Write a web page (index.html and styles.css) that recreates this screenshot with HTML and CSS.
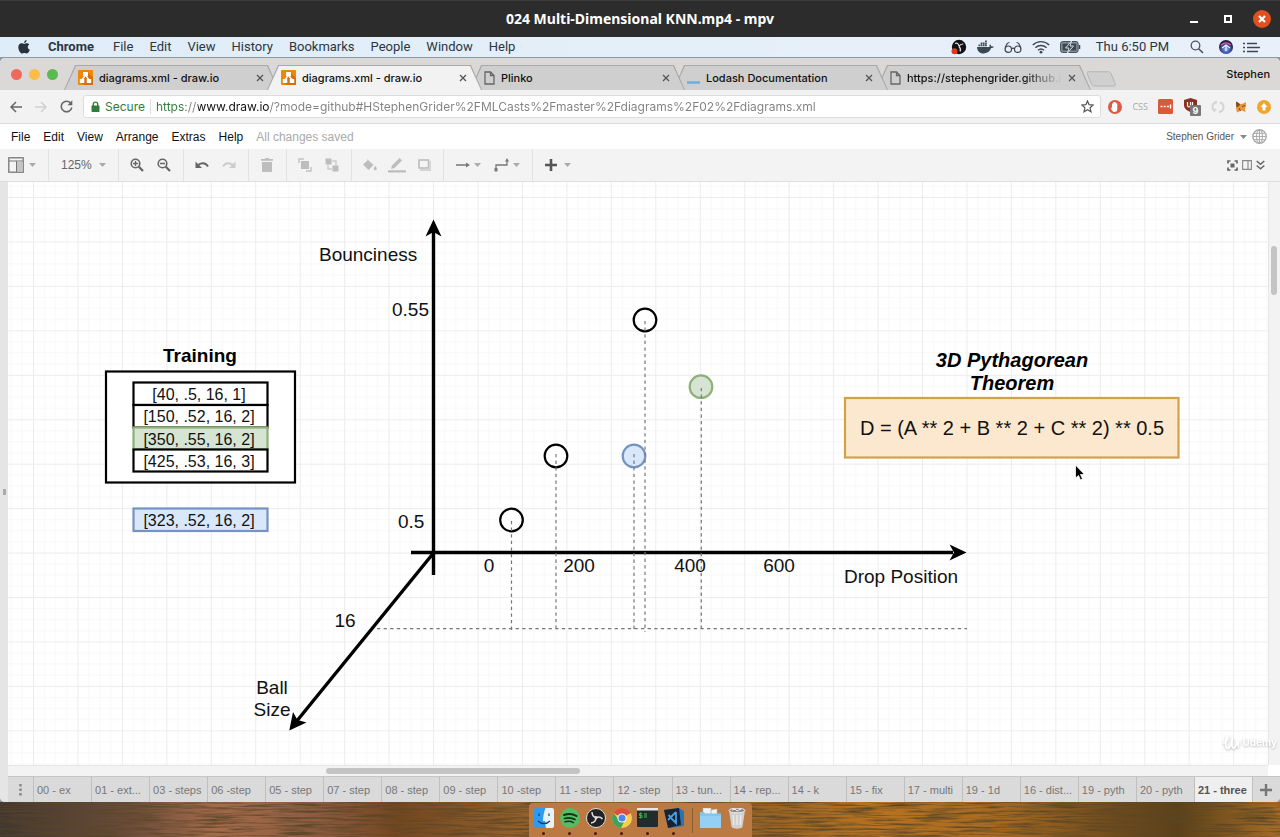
FILE: index.html
```html
<!DOCTYPE html>
<html lang="en">
<head>
<meta charset="utf-8">
<title>024 Multi-Dimensional KNN.mp4 - mpv</title>
<link rel="stylesheet" href="styles.css">
</head>
<body>
<svg class="defs" width="0" height="0" aria-hidden="true">
  <defs>
    <symbol id="drawio" viewBox="0 0 15 15"><rect width="15" height="15" rx="1" fill="#f08705"/><path d="M8 1l7 7v7H6l-4-3z" fill="#d86f06"/><path d="M7.500 5L4 10M7.500 5l3.500 5" stroke="#fff" stroke-width="1.400"/><rect x="5" y="2" width="5" height="4" rx=".5" fill="#fff"/><rect x="1.800" y="9" width="4.500" height="4" rx=".5" fill="#fff"/><rect x="8.700" y="9" width="4.500" height="4" rx=".5" fill="#fff"/></symbol>
    <symbol id="page" viewBox="0 0 11 14"><path d="M1 1h5.500L10 4.500V13H1zM6.500 1v3.500H10" fill="none" stroke="#666" stroke-width="1.300"/></symbol>
    <symbol id="close" viewBox="0 0 8 8"><path d="M1 1l6 6M7 1L1 7" stroke="#555" stroke-width="1.300"/></symbol>
    <symbol id="caret" viewBox="0 0 7 4"><path d="M0 0h7L3.500 4z" fill="currentColor"/></symbol>
  </defs>
</svg>

<header class="titlebar">
  <h1 class="titlebar-title">024 Multi-Dimensional KNN.mp4 - mpv</h1>
  <div class="titlebar-buttons">
    <button class="bare minimize" aria-label="Minimize"><svg width="10" height="10"><path d="M1 8h8" stroke="#fff" stroke-width="2"/></svg></button>
    <button class="bare" aria-label="Maximize"><svg width="10" height="10"><rect x="2" y="2" width="6" height="6" fill="none" stroke="#fff" stroke-width="2"/></svg></button>
    <button class="bare" aria-label="Close"><svg width="18" height="18"><circle cx="9" cy="9" r="9" fill="#e2501e"/><path d="M6 6l6 6M12 6l-6 6" stroke="#fff" stroke-width="2.200"/></svg></button>
  </div>
</header>

<nav class="menubar" aria-label="System">
  <button class="bare apple" aria-label="Apple"><svg width="12" height="14" viewBox="0 0 12 14"><path d="M8.600 0c.1 1.500-1 2.900-2.500 3C6 1.600 7.200.2 8.600 0zM6.200 3.900c.6 0 1.300-.7 2.500-.7 1 0 2 .5 2.600 1.400-2.200 1.300-1.900 4.300.5 5.200-.5 1.400-1.700 3.700-2.900 3.700-.9 0-1.300-.6-2.500-.6s-1.600.6-2.400.6C2.600 13.500.3 10.200.3 7.200c0-2.700 1.700-4 3.200-4 1.200 0 2 .7 2.700.7z" fill="#29333d"/></svg></button>
  <button class="bare app-name">Chrome</button>
  <button class="bare">File</button>
  <button class="bare">Edit</button>
  <button class="bare">View</button>
  <button class="bare">History</button>
  <button class="bare">Bookmarks</button>
  <button class="bare">People</button>
  <button class="bare">Window</button>
  <button class="bare">Help</button>
  <div class="status">
    <svg width="16" height="16" viewBox="0 0 16 16"><circle cx="8" cy="8" r="7.200" fill="#111"/><path d="M4 4.500c2-1 3.500 0 4 2.500M12.300 5c-2.300-.2-3.500.8-4.300 2.500M9 12.500c1-1.500.8-3-1-5" fill="none" stroke="#dde" stroke-width="1.200"/><circle cx="3.500" cy="12.300" r="3" fill="#d93a24"/></svg>
    <svg width="17" height="14" viewBox="0 0 17 14"><path d="M0 7h12.500c.2-1-.1-2 .4-2.700.9.500 1.200 1.300 1.200 2 1-.2 1.900 0 2.700.4-.5 1-1.400 1.400-2.700 1.400C13 11.500 10 13.500 6.500 13.500 2.500 13.500.2 11 0 7z" fill="#3b4854"/><path d="M1.500 5.400h1.700M3.700 5.400h1.700M5.900 5.400h1.700M8.100 5.400h1.700M3.700 3.400h1.700M5.900 3.400h1.700M8.100 3.400h1.700M8.100 1.300h1.700" stroke="#3b4854" stroke-width="1.600"/></svg>
    <svg width="18" height="14" viewBox="0 0 18 14"><g fill="none" stroke="#3b4854" stroke-width="1.200"><circle cx="4.300" cy="9.200" r="3.200"/><circle cx="13.700" cy="9.200" r="3.200"/><path d="M7.500 8.700c1-.8 2-.8 3 0M1.200 8.500C2 5 3 2.500 5.500 2.500M16.800 8.500C16 5 15 2.500 12.500 2.500"/></g></svg>
    <svg width="18" height="14" viewBox="0 0 18 14"><g fill="none" stroke="#3b4854" stroke-width="1.400"><path d="M.8 5C5.500.5 12.500.5 17.200 5M3.400 7.700c3.300-3 7.900-3 11.200 0M6 10.300c1.800-1.600 4.200-1.600 6 0"/></g><circle cx="9" cy="12.200" r="1.400" fill="#3b4854"/></svg>
    <svg width="21" height="12" viewBox="0 0 21 12"><rect x=".6" y=".6" width="17.500" height="10.800" rx="2" fill="#8a949d" stroke="#3b4854"/><rect x="2.500" y="2.500" width="13.700" height="7" fill="#3b4854"/><path d="M11.500 0L5.500 7H9L7.500 12l6-7H10z" fill="#3b4854" stroke="#e6eef6" stroke-width=".9"/><path d="M19.500 4v4" stroke="#3b4854" stroke-width="1.500"/></svg>
    <time class="clock">Thu 6:50 PM</time>
    <svg class="spotlight" width="14" height="14" viewBox="0 0 14 14"><circle cx="5.500" cy="5.500" r="4.300" fill="none" stroke="#4a5560" stroke-width="1.300"/><path d="M8.700 8.700L13 13" stroke="#4a5560" stroke-width="1.600"/></svg>
    <svg class="siri" width="14" height="14" viewBox="0 0 14 14"><defs><radialGradient id="siri" cy=".65"><stop offset="0" stop-color="#9fd8f5"/><stop offset=".45" stop-color="#4467c4"/><stop offset=".75" stop-color="#4a3d8e"/><stop offset="1" stop-color="#232040"/></radialGradient></defs><circle cx="7" cy="7" r="7" fill="url(#siri)"/><path d="M2 5c3-2.500 7-2.500 10 0" fill="none" stroke="#d35fb0" stroke-width="1.200"/><path d="M3 8l4-3 4 3M7 5v6" fill="none" stroke="#e8f6ff" stroke-width="1.200"/></svg>
    <svg width="17" height="11" viewBox="0 0 17 11"><path d="M0 1.500h2M0 5.500h2M0 9.500h2M4 1.500h10M4 5.500h13M4 9.500h11" stroke="#3b4854" stroke-width="1.600"/></svg>
  </div>
</nav>

<main class="browser">
  <div class="tabstrip">
    <div class="lights" aria-hidden="true"><i class="light red"></i><i class="light amber"></i><i class="light green"></i></div>
    <div class="tabs" role="tablist">
      <div class="tab tab-1" role="tab"><svg width="15" height="15"><use href="#drawio"/></svg><span class="tab-label">diagrams.xml - draw.io</span><button class="bare" aria-label="Close tab"><svg width="8" height="8"><use href="#close"/></svg></button></div>
      <div class="tab active" role="tab" aria-selected="true"><svg width="15" height="15"><use href="#drawio"/></svg><span class="tab-label">diagrams.xml - draw.io</span><button class="bare" aria-label="Close tab"><svg width="8" height="8"><use href="#close"/></svg></button></div>
      <div class="tab tab-3" role="tab"><svg width="11" height="14"><use href="#page"/></svg><span class="tab-label">Plinko</span><button class="bare" aria-label="Close tab"><svg width="8" height="8"><use href="#close"/></svg></button></div>
      <div class="tab tab-4" role="tab"><svg width="13" height="15"><path d="M0 12.500h13" stroke="#6caee0" stroke-width="2.500"/></svg><span class="tab-label">Lodash Documentation</span><button class="bare" aria-label="Close tab"><svg width="8" height="8"><use href="#close"/></svg></button></div>
      <div class="tab" role="tab"><svg width="11" height="14"><use href="#page"/></svg><span class="tab-label faded">https://stephengrider.github.io/</span><button class="bare" aria-label="Close tab"><svg width="8" height="8"><use href="#close"/></svg></button></div>
    </div>
    <button class="bare new-tab" aria-label="New tab"><svg width="30" height="16" viewBox="0 0 30 16"><path d="M2.500.8h20c1.500 0 2 .5 2.600 1.700l4 10c.5 1.500 0 2.500-1.300 2.500H8.500c-1.500 0-2.200-.5-2.800-1.800L1.300 3C.7 1.500 1 .8 2.500.8z" fill="#d0d0d0" stroke="#b4b4b4"/></svg></button>
    <span class="profile">Stephen</span>
  </div>

  <div class="navbar">
    <button class="bare nav-btn" aria-label="Back"><svg width="12" height="12" viewBox="0 0 12 12"><path d="M12 6H1M6 1L1 6l5 5" fill="none" stroke="#666" stroke-width="1.500"/></svg></button>
    <button class="bare nav-btn" aria-label="Forward"><svg width="12" height="12" viewBox="0 0 12 12"><path d="M0 6h11M6 1l5 5-5 5" fill="none" stroke="#d0d0d0" stroke-width="1.500"/></svg></button>
    <button class="bare nav-btn" aria-label="Reload"><svg width="13" height="13" viewBox="0 0 13 13"><path d="M11 3.500A5.300 5.300 0 1 0 11.800 7.500" fill="none" stroke="#666" stroke-width="1.500"/><path d="M12.300.3v4.900H7.500z" fill="#666"/></svg></button>
    <div class="address">
      <svg width="9" height="12" viewBox="0 0 9 12"><rect x=".5" y="4.500" width="8" height="6.500" rx=".8" fill="#2f7d3b"/><path d="M2.300 5V3.300a2.200 2.200 0 0 1 4.400 0V5" fill="none" stroke="#2f7d3b" stroke-width="1.400"/></svg>
      <span class="secure">Secure</span>
      <input class="url" type="text" aria-label="Address" value="https://www.draw.io/?mode=github#HStephenGrider%2FMLCasts%2Fmaster%2Fdiagrams%2F02%2Fdiagrams.xml">
      <button class="bare" aria-label="Bookmark"><svg width="13" height="13" viewBox="0 0 13 13"><path d="M6.500 1l1.600 3.700 4 .4-3 2.700.9 4-3.500-2.100L3 11.800l.9-4-3-2.700 4-.4z" fill="none" stroke="#555" stroke-width="1.200"/></svg></button>
    </div>
    <div class="extensions">
      <svg width="14" height="14" viewBox="0 0 14 14"><circle cx="7" cy="7" r="7" fill="#dd5a43"/><path d="M4 7V3.500h1V2.500h1V2h1.200v.5h1.100v1h1V9c0 2-1 3-2.700 3C4.500 12 4 10.500 3 8.500z" fill="#fff"/></svg>
      <span class="css-badge">CSS</span>
      <svg width="15" height="15" viewBox="0 0 15 15"><rect width="15" height="15" rx="1.500" fill="#d9593a"/><path d="M2.500 7.500h2M5.700 7.500h2M8.900 7.500h2M12.500 5.500v4" stroke="#fff" stroke-width="1.500"/></svg>
      <svg width="18" height="18" viewBox="0 0 18 18"><path d="M7.500 0L14 2v5c0 3.500-3 5.700-6.500 7C4 12.700 1 10.500 1 7V2z" fill="#8b2f23"/><path d="M4.500 4v3.500c0 2 3 2 3 0V4M9.500 4v5" stroke="#fff" fill="none" stroke-width="1.200"/><rect x="7" y="7" width="11" height="11" rx="1" fill="#777"/><text x="12.500" y="16" class="badge-text">9</text></svg>
      <svg width="14" height="14" viewBox="0 0 14 14"><path d="M6 2a5 5 0 0 0-3.500 8M8 12a5 5 0 0 0 3.500-8M5 9l-2.500 2.500M9 2.500l3 1.500" fill="none" stroke="#d4d4d4" stroke-width="2"/></svg>
      <svg width="12" height="12" viewBox="0 0 12 12"><path d="M1 1l3 2h3l4-2v5l-1 1 .5 4-4-1.500L2 11.500 1 7z" fill="#e8963a"/><path d="M1.500 1L5 3.500 2 6zM7 5.500l3-1M4 7l1.500 3" stroke="#7c4c28" fill="#7c4c28"/></svg>
      <svg width="14" height="14" viewBox="0 0 14 14"><circle cx="7" cy="7" r="7" fill="#f0a52f"/><path d="M7 3l3.500 4h-2v3.500h-3V7h-2z" fill="#fff"/></svg>
    </div>
  </div>

  <nav class="app-menu" aria-label="Diagram editor">
    <button class="bare">File</button>
    <button class="bare">Edit</button>
    <button class="bare">View</button>
    <button class="bare">Arrange</button>
    <button class="bare">Extras</button>
    <button class="bare">Help</button>
    <span class="saved">All changes saved</span>
    <button class="bare account">Stephen Grider <svg width="7" height="4"><use href="#caret"/></svg></button>
    <button class="bare" aria-label="Language"><svg width="15" height="15" viewBox="0 0 15 15"><g fill="none" stroke="#aaa"><circle cx="7.500" cy="7.500" r="6.700" stroke-width="1.400"/><ellipse cx="7.500" cy="7.500" rx="3" ry="6.500"/><path d="M7.500 1v13M1 7.500h13M2 4.300h11M2 10.700h11"/></g></svg></button>
  </nav>

  <div class="toolbar" role="toolbar">
    <div class="group view-group"><button class="bare drop" aria-label="View"><svg width="16" height="16" viewBox="0 0 16 16"><rect x=".8" y=".8" width="14.400" height="14.400" fill="#f4f4f4" stroke="#777" stroke-width="1.300"/><path d="M1 4h14" stroke="#777"/><rect x="9" y="5" width="5.500" height="9.500" fill="#c4c4c4"/><path d="M8.500 4v11" stroke="#777"/></svg><svg class="caret" width="7" height="4"><use href="#caret"/></svg></button></div>
    <div class="group zoom-group"><button class="bare drop zoom-label">125% <svg class="caret" width="7" height="4"><use href="#caret"/></svg></button></div>
    <div class="group">
      <button class="bare tool" aria-label="Zoom in"><svg width="14" height="14" viewBox="0 0 14 14"><circle cx="5.500" cy="5.500" r="4.300" fill="none" stroke="#666" stroke-width="1.600"/><path d="M3 5.500h5M5.500 3v5" stroke="#666" stroke-width="1.300"/><path d="M8.800 8.800L13 13" stroke="#666" stroke-width="2.300"/></svg></button>
      <button class="bare tool" aria-label="Zoom out"><svg width="14" height="14" viewBox="0 0 14 14"><circle cx="5.500" cy="5.500" r="4.300" fill="none" stroke="#666" stroke-width="1.600"/><path d="M3 5.500h5" stroke="#666" stroke-width="1.300"/><path d="M8.800 8.800L13 13" stroke="#666" stroke-width="2.300"/></svg></button>
    </div>
    <div class="group">
      <button class="bare tool" aria-label="Undo"><svg width="14" height="8" viewBox="0 0 14 8"><path d="M2.500 4.500C6 1 10.500 1.500 13 5.500" fill="none" stroke="#666" stroke-width="2"/><path d="M.5.500V7H7z" fill="#666"/></svg></button>
      <button class="bare tool" aria-label="Redo"><svg width="14" height="8" viewBox="0 0 14 8"><path d="M11.500 4.500C8 1 3.500 1.500 1 5.500" fill="none" stroke="#ccc" stroke-width="2"/><path d="M13.500.500V7H7z" fill="#ccc"/></svg></button>
    </div>
    <div class="group"><button class="bare tool" aria-label="Delete"><svg width="12" height="14" viewBox="0 0 12 14"><path d="M0 1h3.500L4.500 0h3l1 1H12v1.800H0zM1 4h10v9.300c0 .4-.3.700-.7.700H1.700c-.4 0-.7-.3-.7-.7z" fill="#bdbdbd"/></svg></button></div>
    <div class="group">
      <button class="bare tool" aria-label="To front"><svg width="14" height="14" viewBox="0 0 14 14"><path d="M1 5V1h5M13 9v4H8" fill="none" stroke="#c4c4c4" stroke-width="1.500"/><rect x="3" y="3" width="8" height="8" fill="#bdbdbd"/></svg></button>
      <button class="bare tool" aria-label="To back"><svg width="14" height="14" viewBox="0 0 14 14"><path d="M7 3h4v4M3 7v4h4" fill="none" stroke="#ccc" stroke-width="1.500"/><rect width="6" height="6" x=".5" y=".5" fill="#bdbdbd"/><rect x="7.500" y="7.500" width="6" height="6" fill="#bdbdbd"/></svg></button>
    </div>
    <div class="group">
      <button class="bare tool" aria-label="Fill color"><svg width="14" height="14" viewBox="0 0 14 14"><path d="M4 1l6.500 6-5 5L0 6.500l4.500-4z" fill="#bdbdbd"/><path d="M12.300 8c1 1.300 1.500 2 1.500 2.800a1.500 1.500 0 0 1-3 0c0-.8.600-1.500 1.500-2.800z" fill="#bdbdbd"/></svg></button>
      <button class="bare tool" aria-label="Line color"><svg width="18" height="16" viewBox="0 0 18 16"><path d="M3 12l1-3.500L11.500 1 14 3.500 6.500 11z" fill="#bdbdbd"/><path d="M0 14.300h18" stroke="#bdbdbd" stroke-width="2.300"/></svg></button>
      <button class="bare tool" aria-label="Shadow"><svg width="13" height="12" viewBox="0 0 13 12"><path d="M2 11h10.500V2" fill="none" stroke="#d4d4d4" stroke-width="2"/><rect x="1" y="1" width="9.500" height="8" fill="#f4f4f4" stroke="#bdbdbd" stroke-width="1.600"/></svg></button>
    </div>
    <div class="group">
      <button class="bare drop line-drop" aria-label="Connection"><svg width="14" height="6" viewBox="0 0 14 6"><path d="M0 3h11" stroke="#777" stroke-width="1.300"/><path d="M10 .5L14 3l-4 2.500z" fill="#777"/></svg><svg class="caret" width="7" height="4"><use href="#caret"/></svg></button>
      <button class="bare drop line-drop" aria-label="Waypoints"><svg width="15" height="14" viewBox="0 0 15 14"><path d="M2 12V7h11V2" fill="none" stroke="#777" stroke-width="1.300"/><path d="M.5 10h3v3.500h-3zM11 3.500L13 0l2 3.500z" fill="#777"/></svg><svg class="caret" width="7" height="4"><use href="#caret"/></svg></button>
    </div>
    <div class="group last"><button class="bare drop" aria-label="Insert"><svg width="12" height="12"><path d="M0 6h12M6 0v12" stroke="#555" stroke-width="2.600"/></svg><svg class="caret" width="7" height="4"><use href="#caret"/></svg></button></div>
    <div class="toolbar-right">
      <button class="bare" aria-label="Fullscreen"><svg width="11" height="11" viewBox="0 0 11 11"><path d="M1 3.500V1h2.500M7.500 1H10v2.500M10 7.500V10H7.500M3.500 10H1V7.500" fill="none" stroke="#666" stroke-width="1.700"/><rect x="3.500" y="3.500" width="4" height="4" fill="#666"/></svg></button>
      <button class="bare" aria-label="Format"><svg width="10" height="10" viewBox="0 0 10 10"><path d="M.6.600h8.800v8.800H.6zM6 .6v8.800" fill="none" stroke="#888" stroke-width="1.100"/></svg></button>
      <button class="bare" aria-label="Collapse"><svg width="9" height="10" viewBox="0 0 9 10"><path d="M.7 1L4.500 4.300 8.300 1M.7 5.500l3.800 3.300 3.800-3.300" fill="none" stroke="#666" stroke-width="1.500"/></svg></button>
    </div>
  </div>

  <div class="editor">
    <div class="splitter"><i class="grip"></i></div>
    <section class="workspace">
      <div class="canvas-row">
        <svg class="canvas" width="100%" height="100%" role="img" aria-label="Bounciness, drop position and ball size chart">
          <defs>
            <pattern id="grid" x="33" y="197" width="44.450" height="44.450" patternUnits="userSpaceOnUse">
              <path d="M11.500 0v45M22.500 0v45M33.500 0v45M0 11.500h45M0 22.500h45M0 33.500h45" stroke="#f8f8f8"/>
              <path d="M.5 0v45M0 .5h45" stroke="#ececec"/>
            </pattern>
          </defs>
          <g transform="translate(-8 -182)">
            <rect width="4000" height="4000" fill="url(#grid)"/>
            <g stroke="#000" stroke-width="3.400">
              <path d="M433.500 575V230M411 552.500h542M433.500 553L296 722"/>
            </g>
            <path d="M433.500 219.500l8 17-8-4.500-8 4.500zM966.500 552.500l-17 8 4.500-8-4.500-8zM289.300 730.500l3.700-18.500 4.500 8 9 2.500z"/>
            <g class="nodes">
              <rect x="106" y="371.500" width="189" height="111" fill="#fff"/>
              <rect x="133.500" y="382.500" width="134" height="22.500" fill="#fff"/>
              <rect x="133.500" y="405" width="134" height="22.500" fill="#fff"/>
              <rect x="133.500" y="427.500" width="134" height="22" class="green"/>
              <rect x="133.500" y="449.500" width="134" height="22" fill="#fff"/>
              <rect x="133.500" y="508.500" width="134" height="22.500" class="blue"/>
              <rect x="845" y="398" width="333.500" height="59.500" class="orange"/>
              <circle cx="645" cy="320" r="11.300" fill="#fff"/>
              <circle cx="701" cy="386.700" r="11.300" class="green"/>
              <circle cx="556" cy="456" r="11.300" fill="#fff"/>
              <circle cx="634" cy="456" r="11.300" class="blue"/>
              <circle cx="511.500" cy="520" r="11.300" fill="#fff"/>
            </g>
            <g class="dashes">
              <path d="M511.500 521v111M556 454v178M634 454v178M645 321v311M701.300 388v242M377 628.700h590"/>
            </g>
            <g class="label">
              <text x="319" y="261">Bounciness</text>
              <text x="392" y="316">0.55</text>
              <text x="398" y="528">0.5</text>
              <text x="489" y="572" class="mid">0</text>
              <text x="579" y="572" class="mid">200</text>
              <text x="690" y="572" class="mid">400</text>
              <text x="779" y="572" class="mid">600</text>
              <text x="901" y="583" class="mid">Drop Position</text>
              <text x="345" y="627" class="mid">16</text>
              <text x="272" y="694" class="mid">Ball</text>
              <text x="272" y="716" class="mid">Size</text>
              <text x="200" y="362" class="mid bold">Training</text>
              <text x="1012" y="367" class="mid bold italic">3D Pythagorean</text>
              <text x="1012" y="390" class="mid bold italic">Theorem</text>
              <text x="1012" y="435" class="mid formula">D = (A ** 2 + B ** 2 + C ** 2) ** 0.5</text>
            </g>
            <g class="label small">
              <text x="199" y="400" class="mid">[40, .5, 16, 1]</text>
              <text x="199" y="422" class="mid">[150, .52, 16, 2]</text>
              <text x="199" y="445" class="mid">[350, .55, 16, 2]</text>
              <text x="199" y="467" class="mid">[425, .53, 16, 3]</text>
              <text x="199" y="526" class="mid">[323, .52, 16, 2]</text>
            </g>
            <path d="M1075.500 465v13l3-2.500 2 4.500 2-1-2-4.500h4z" stroke="#fff" stroke-width=".8"/>
          </g>
        </svg>
        <div class="vscroll"><i class="vthumb"></i></div>
      </div>
      <div class="hscroll-row"><div class="hscroll"><i class="hthumb"></i></div><i class="corner"></i></div>
      <div class="watermark"><svg width="18" height="15" viewBox="0 0 18 15"><path d="M1 8c3 0 5-4 4.500-6.500C3.500 3 2.500 13 5.500 13.500 8.500 13 10 6 10.500 2.500 9.500 8 9.500 13 12 13c2.500-1 3-7 4.500-7 .5 2-1 6 .5 6" fill="none" stroke="#fff" stroke-width="2" stroke-linejoin="round"/></svg><span>Udemy</span></div>
      <div class="sheets" role="tablist">
        <button class="bare sheet-menu" aria-label="Pages"><svg width="3" height="12"><path d="M1.500 0v12" stroke="#888" stroke-width="2.500" stroke-dasharray="2.500 2"/></svg></button>
        <button class="bare sheet">00 - ex</button>
        <button class="bare sheet">01 - ext...</button>
        <button class="bare sheet">03 - steps</button>
        <button class="bare sheet">06 -step</button>
        <button class="bare sheet">05 - step</button>
        <button class="bare sheet">07 - step</button>
        <button class="bare sheet">08 - step</button>
        <button class="bare sheet">09 - step</button>
        <button class="bare sheet">10 -step</button>
        <button class="bare sheet">11 - step</button>
        <button class="bare sheet">12 - step</button>
        <button class="bare sheet">13 - tun...</button>
        <button class="bare sheet">14 - rep...</button>
        <button class="bare sheet">14 - k</button>
        <button class="bare sheet">15 - fix</button>
        <button class="bare sheet">17 - multi</button>
        <button class="bare sheet">19 - 1d</button>
        <button class="bare sheet">16 - dist...</button>
        <button class="bare sheet">19 - pyth</button>
        <button class="bare sheet">20 - pyth</button>
        <button class="bare sheet current">21 - three</button>
        <button class="bare sheet-add" aria-label="Insert page"><svg width="12" height="12"><path d="M0 6h12M6 0v12" stroke="#777" stroke-width="2.400"/></svg></button>
      </div>
    </section>
  </div>
</main>

<footer class="desktop">
  <svg class="grain" width="100%" height="100%" aria-hidden="true">
    <filter id="wood" x="0" y="0" width="100%" height="100%"><feTurbulence type="fractalNoise" baseFrequency=".025 .45" numOctaves="4" seed="8"/><feColorMatrix values="0 0 0 0 0.1  0 0 0 0 0.06  0 0 0 0 0.02  2.2 0 0 0 -0.85"/></filter>
    <rect width="100%" height="100%" filter="url(#wood)"/>
  </svg>
  <div class="dock">
    <button class="bare dock-app" aria-label="Finder"><svg width="20" height="20" viewBox="0 0 20 20"><rect width="20" height="20" rx="2" fill="#2f9bf0"/><path d="M11.500 0H18a2 2 0 0 1 2 2v16a2 2 0 0 1-2 2h-6c-.5-2-.8-4.500-.8-7H9c0-5 1-9 2.500-13z" fill="#e9f1f8"/><path d="M5 5.500v2.500M15 5.500v2.500M4 13c3.500 3.500 8.500 3.500 12 0" fill="none" stroke="#1b3c66" stroke-width="1.200"/></svg></button>
    <button class="bare dock-app" aria-label="Spotify"><svg width="20" height="20" viewBox="0 0 20 20"><circle cx="10" cy="10" r="10" fill="#54bd64"/><g fill="none" stroke="#14301b" stroke-linecap="round"><path d="M4 7c4-1.300 9-1 12.500 1" stroke-width="2"/><path d="M4.500 10.500c3.500-1 7.500-.7 10.500 1" stroke-width="1.700"/><path d="M5 13.700c3-.8 6-.5 8.500.9" stroke-width="1.400"/></g></svg></button>
    <button class="bare dock-app" aria-label="OBS"><svg width="20" height="20" viewBox="0 0 20 20"><circle cx="10" cy="10" r="9.500" fill="#222226" stroke="#ddd"/><path d="M6 4c0 3.500 1.500 5 4 5.500 2.500-1 4.500-1 6.500 1.500M10 9.500c0 3-1.500 5-5 5.500" fill="none" stroke="#ddd" stroke-width="1.500"/><circle cx="10" cy="9.700" r="1.600" fill="#ddd"/></svg></button>
    <button class="bare dock-app" aria-label="Chrome"><svg width="20" height="20" viewBox="0 0 20 20"><circle cx="10" cy="10" r="10" fill="#f7cf4d"/><path d="M10 10L1.400 5A10 10 0 0 1 18.700 5z" fill="#d9503f"/><path d="M10 10H5.500L1.400 5A10 10 0 0 0 9 20l4-8z" fill="#3fa35b"/><circle cx="10" cy="10" r="4.600" fill="#fff"/><circle cx="10" cy="10" r="3.600" fill="#4c86ea"/></svg></button>
    <button class="bare dock-app" aria-label="Terminal"><svg width="21" height="19" viewBox="0 0 21 19"><rect width="21" height="19" rx="1" fill="#232b2d"/><rect width="21" height="2.500" fill="#e8e8e8"/><path d="M5 5.500H2.500v2H5v2H2M3.700 4.500v6" fill="none" stroke="#3fae4c"/><rect x="7" y="5" width="3" height="5" fill="#2c7a38"/></svg></button>
    <button class="bare dock-app" aria-label="Visual Studio Code"><svg width="20" height="20" viewBox="0 0 20 20"><path d="M0 2L15 0l5 3v15l-15 2z" fill="#2874b8"/><path d="M0 2L15 0l2 17-13 3z" fill="#172333"/><path d="M12 4v11l-6-6M12 4L4 12M4.500 7l2 2" fill="none" stroke="#49a0e3" stroke-width="1.800"/></svg></button>
    <i class="dock-sep"></i>
    <button class="bare dock-app idle" aria-label="Documents"><svg width="21" height="20" viewBox="0 0 21 20"><path d="M3 0h8v6H3zM11 2l6-1v6h-6z" fill="#f2f2f2" stroke="#bbb" stroke-width=".6"/><path d="M0 4h4l1 1.500h16V20H0z" fill="#84c5ee"/><path d="M0 8h21v12H0z" fill="#94d0f5"/></svg></button>
    <button class="bare dock-app idle" aria-label="Trash"><svg width="18" height="21" viewBox="0 0 18 21"><path d="M1 2h16l-2.500 17c-2 2.300-9 2.300-11 0z" fill="#d2d0ce"/><ellipse cx="9" cy="2.500" rx="8" ry="2.300" fill="#8d8b89" stroke="#eee"/><path d="M4 2l3-1 2 2 4-2M5 7l1 10M9 7v10M13 7l-1 10" fill="none" stroke="#f4f4f4"/></svg></button>
  </div>
</footer>
</body>
</html>
```
FILE: styles.css
```css
* { box-sizing: border-box; }

body {
  margin: 0;
  height: 100vh;
  display: flex;
  flex-direction: column;
  overflow: hidden;
  background: #8c9aa5;
  font-family: Inter, Roboto, sans-serif;
  color: #111;
}

svg { display: block; flex: none; }
.defs { position: absolute; }

.bare {
  margin: 0;
  padding: 0;
  border: 0;
  background: none;
  font: inherit;
  color: inherit;
  white-space: nowrap;
}

/* Player title bar */
.titlebar {
  flex: none;
  height: 37px;
  display: grid;
  grid-template-columns: 1fr auto 1fr;
  align-items: center;
  padding: 0 9px;
  background: #2c2c2c;
  border-top: 1px solid #3c3c3c;
  color: #fff;
}
.titlebar-title {
  grid-column: 2;
  margin: 0;
  font: bold 14px/20px "Noto Sans", sans-serif;
}
.titlebar-buttons {
  justify-self: end;
  display: flex;
  align-items: center;
  gap: 20px;
}
.minimize { margin-right: 4px; }

/* System menu bar */
.menubar {
  flex: none;
  height: 20px;
  display: flex;
  align-items: center;
  gap: 16px;
  padding: 0 20px 0 18px;
  background: linear-gradient(90deg, #dfedf8, #e9f0fa);
  font: 13px/20px Roboto, sans-serif;
  color: #2c3640;
}
.apple { margin-right: 2px; }
.app-name { margin-right: 3px; font-weight: bold; }
.status {
  margin-left: auto;
  display: flex;
  align-items: center;
  gap: 10px;
}
.clock { margin-left: 5px; }
.spotlight { margin-left: 11px; }
.siri { margin-left: 5px; }

/* Browser window */
.browser {
  flex: 1;
  min-height: 0;
  margin-top: 1px;
  display: flex;
  flex-direction: column;
  border-radius: 5px;
  overflow: hidden;
  background: #f2f2f2;
}
.tabstrip {
  flex: none;
  height: 32px;
  display: flex;
  align-items: flex-end;
  padding: 0 10px 0 11px;
  background: #dad9d8;
  font-size: 11px;
  font-weight: 500;
}
.lights {
  flex: none;
  display: flex;
  gap: 7px;
  width: 53px;
  padding-bottom: 10px;
}
.light { width: 11px; height: 11px; border-radius: 50%; }
.red { background: #f0695a; }
.amber { background: #fabd45; }
.green { background: #5bb950; }
.tabs { flex: 0 1 1027px; display: flex; min-width: 0; isolation: isolate; }
.tab {
  position: relative;
  flex: 1 1 0;
  min-width: 0;
  height: 25px;
  display: flex;
  align-items: center;
  gap: 6px;
  padding: 0 15px 0 14px;
}
.tab + .tab { margin-left: -12px; }
.tab::before, .tab::after {
  content: "";
  position: absolute;
  inset: 0;
  z-index: -1;
  background: #a9a9a9;
  clip-path: polygon(0 100%, 11px 0, calc(100% - 11px) 0, 100% 100%);
}
.tab::after {
  inset: 1px 1px 0;
  background: #cfcfcf;
}
.tab-1 { z-index: 1; }
.tab-4 { z-index: 2; }
.tab-3 { z-index: 3; }
.tab.active { z-index: 4; }
.active::after { background: #f2f2f2; }
.tab-label {
  flex: 1;
  min-width: 0;
  overflow: hidden;
  white-space: nowrap;
}
.faded { -webkit-mask-image: linear-gradient(90deg, #000 75%, transparent); mask-image: linear-gradient(90deg, #000 75%, transparent); }
.new-tab { margin-left: -5px; padding-bottom: 3px; }
.profile { margin-left: auto; align-self: center; }

.navbar {
  flex: none;
  height: 34px;
  display: flex;
  align-items: center;
  gap: 13px;
  padding: 0 9px 0 10px;
  border-bottom: 1px solid #dcdcdc;
}
.address {
  flex: 1;
  height: 23px;
  display: flex;
  align-items: center;
  gap: 5px;
  margin-left: -3px;
  padding: 0 6px 0 7px;
  background: #fff;
  border: 1px solid #ddd;
  border-radius: 3px;
  font-size: 12px;
}
.secure {
  padding-right: 5px;
  border-right: 1px solid #ddd;
  color: #2f7d3b;
}
.url {
  flex: 1;
  min-width: 0;
  margin: 0;
  padding: 0;
  border: 0;
  font: 12px/16px Inter, Roboto, sans-serif;
  background: linear-gradient(90deg, #2f7d3b 30px, #808080 30px, #808080 42px, #111 42px, #111 113px, #808080 113px);
  -webkit-background-clip: text;
  background-clip: text;
  color: transparent;
}
.extensions { display: flex; align-items: center; gap: 10px; margin-left: -6px; }
.css-badge { font: 9px/12px "Open Sans", sans-serif; color: #aaa; }
.badge-text { font: bold 9px Inter, sans-serif; fill: #fff; text-anchor: middle; }

/* Diagram editor */
.app-menu {
  flex: none;
  height: 25px;
  display: flex;
  align-items: center;
  gap: 13px;
  padding: 0 13px 0 11px;
  background: #fff;
  font: 12px/16px "Liberation Sans", Arial, sans-serif;
}
.saved { color: #aaa; }
.account {
  display: flex;
  align-items: center;
  gap: 6px;
  margin-left: auto;
  margin-right: -8px;
  font-size: 10px;
  color: #555;
}
.account svg { color: #888; }

.toolbar {
  flex: none;
  height: 33px;
  display: flex;
  background: #f3f3f3;
  border-bottom: 1px solid #dedede;
  font: 12px/16px "Liberation Sans", Arial, sans-serif;
  color: #666;
}
.group {
  display: flex;
  align-items: center;
  padding: 0 5px;
  border-right: 1px solid #e2e2e2;
}
.last { border-right: 0; padding-left: 12px; }
.view-group { padding: 0 12px 0 8px; }
.zoom-group { padding: 0 12px; }
.tool { width: 27px; display: flex; justify-content: center; }
.drop { display: flex; align-items: center; gap: 7px; }
.view-group .drop { gap: 5px; }
.line-drop { width: 39px; justify-content: center; gap: 4px; }
.caret { color: #aaa; }
.toolbar-right {
  margin-left: auto;
  display: flex;
  align-items: center;
  gap: 4px;
  padding-right: 15px;
}

.editor { flex: 1; min-height: 0; display: flex; }
.splitter {
  flex: none;
  width: 8px;
  display: flex;
  align-items: center;
  justify-content: center;
  background: #e5e5e5;
}
.grip { width: 3px; height: 6px; background: #aaa; }
.workspace {
  position: relative;
  flex: 1;
  min-width: 0;
  display: flex;
  flex-direction: column;
}
.canvas-row { flex: 1; min-height: 0; display: flex; background: #fff; }
.canvas { flex: 1; min-width: 0; }
.nodes { stroke: #000; stroke-width: 2.2px; }
.nodes .green { fill: #d6e4d3; stroke: #8db077; }
.nodes .blue { fill: #d9e7fb; stroke: #7593c0; }
.nodes .orange { fill: #fce8cf; stroke: #d0a24a; }
.dashes { fill: none; stroke: #777; stroke-width: 1.2px; stroke-dasharray: 3.3 3.3; }
.label { font: 19px "Liberation Sans", Arial, sans-serif; fill: #111; }
.small { font-size: 16px; }
.mid { text-anchor: middle; }
.bold { font-weight: bold; fill: #000; }
.italic { font-style: italic; font-size: 20px; }
.formula { font-size: 20px; }

.vscroll {
  flex: none;
  width: 12px;
  padding: 64px 0 0 2px;
  background: #f3f3f3;
  border-left: 1px solid #e6e6e6;
}
.vthumb { display: block; width: 6px; height: 49px; border-radius: 3px; background: #c4c4c4; }
.hscroll-row { flex: none; height: 11px; display: flex; }
.hscroll {
  flex: 1;
  padding: 2px 0 0 25%;
  background: #f3f3f3;
  border-top: 1px solid #e6e6e6;
}
.hthumb { display: block; width: 27%; height: 6px; border-radius: 3px; background: #c4c4c4; }
.corner { width: 12px; background: #fff; }
.watermark {
  position: absolute;
  right: 3px;
  bottom: 52px;
  display: flex;
  align-items: center;
  gap: 2px;
  font: bold 10px/16px Inter, sans-serif;
  color: #fff;
  filter: drop-shadow(0 1px 1px #bbb);
}

.sheets {
  flex: none;
  height: 26px;
  display: flex;
  background: #dadada;
  border-top: 1px solid #c6c6c6;
  font: 11px/14px "Liberation Sans", Arial, sans-serif;
  color: #777;
}
.sheet-menu, .sheet-add {
  flex: none;
  width: 25px;
  display: flex;
  align-items: center;
  justify-content: center;
}
.sheet-add { width: 27px; }
.sheet {
  flex: 1 1 0;
  min-width: 0;
  padding-left: 3px;
  border-left: 1px solid #bfbfbf;
  overflow: hidden;
  text-align: left;
}
.current { background: #efefef; font-weight: bold; color: #555; border-right: 1px solid #bfbfbf; }

/* Desktop and dock */
.desktop {
  position: relative;
  flex: none;
  height: 35px;
  display: flex;
  justify-content: center;
  align-items: flex-end;
  background: linear-gradient(90deg, #40372f, #6b4c39 10%, #a56b4b 17%, #8d5b40 25%, #74461f 31%, #94602a 40%, #9a6424 60%, #b87320 68%, #a86a20 78%, #6f4b1c 87%, #5c4117 92%, #a66c27);
}
.grain { position: absolute; inset: 0; }
.dock {
  position: relative;
  display: flex;
  gap: 6px;
  height: 34px;
  padding: 5px 5px 0;
  border-radius: 4px 4px 0 0;
  background: #bb7a42;
}
.dock-app {
  width: 20px;
  display: flex;
  flex-direction: column;
  align-items: center;
  justify-content: space-between;
  padding-bottom: 2px;
}
.dock-app::after { content: ""; width: 3px; height: 3px; border-radius: 50%; background: #4a1a0a; }
.idle::after { visibility: hidden; }
.dock-sep { width: 1px; margin: 0 2px 4px; background: #8f5a2e; }
```
